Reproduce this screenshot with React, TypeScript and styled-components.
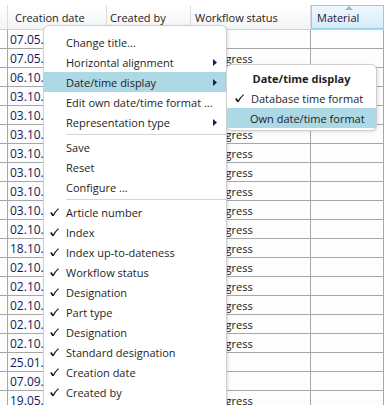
import React from "react";
import styled, { createGlobalStyle } from "styled-components";

const GlobalStyle = createGlobalStyle`
    body {
        margin: 0;
        background: #ffffff;
        font-family: "Open Sans", "Noto Sans", sans-serif;
        font-size: 11px;
    }
`;

const dates = [
    "07.05.", "07.05.", "06.10.", "03.10.", "03.10.", "03.10.", "03.10.",
    "03.10.", "03.10.", "03.10.", "02.10.", "18.10.", "02.10.", "02.10.",
    "02.10.", "02.10.", "02.10.", "25.01.", "07.09.", "19.05.",
];
const emptyStatus = [0, 17, 18];

const columns = "8px 99px 84px 120px 1fr";

const Screen = styled.div`
    position: relative;
    width: 384px;
    height: 405px;
    overflow: hidden;
    background: #fdfdfd;
`;

const TopStrip = styled.div`
    height: 5px;
    background: #ffffff;
`;

const HeaderRow = styled.div`
    display: grid;
    grid-template-columns: ${columns};
    height: 24px;
    background: linear-gradient(#ffffff, #f3f4f6);
    border-bottom: 1px solid #d0d0d0;
`;

const HeaderCell = styled.div<{ $active?: boolean; $pad?: number }>`
    position: relative;
    box-sizing: border-box;
    display: flex;
    align-items: center;
    padding-left: ${(p) => p.$pad ?? 4}px;
    color: ${(p) => (p.$active ? "#1e1436" : "#1b1b1b")};
    font-size: 11px;
    white-space: nowrap;
    overflow: hidden;
    border-right: 1px solid #dcdcdc;
    ${(p) =>
        p.$active &&
        `
        background: linear-gradient(#eef8fd, #d6edf9);
        border: 1px solid #90cdee;
        padding-left: 5px;
    `}
`;

const SortArrow = styled.svg`
    position: absolute;
    top: 0;
    left: 33px;
`;

const Row = styled.div`
    display: grid;
    grid-template-columns: ${columns};
    height: 19px;
    border-bottom: 1px solid #a7a7a7;
    box-sizing: border-box;
`;

const Cell = styled.div<{ $date?: boolean }>`
    box-sizing: border-box;
    display: flex;
    align-items: center;
    padding-left: ${(p) => (p.$date ? 2 : 4)}px;
    border-right: 1px solid #a7a7a7;
    color: ${(p) => (p.$date ? "#131a5e" : "#202020")};
    font-size: ${(p) => (p.$date ? 12 : 11)}px;
    white-space: nowrap;
    overflow: hidden;
`;

const Menu = styled.div`
    position: absolute;
    left: 43px;
    top: 25px;
    width: 184px;
    height: 400px;
    box-sizing: border-box;
    padding-top: 6px;
    background: #ffffff;
    border: 1px solid #cfcfcf;
    border-radius: 6px 6px 0 0;
    box-shadow: 1px 1px 3px rgba(0, 0, 0, 0.12);
`;

const Item = styled.div<{ $hot?: boolean; $indent?: number }>`
    position: relative;
    display: flex;
    align-items: center;
    height: 20px;
    padding-left: ${(p) => p.$indent ?? 22}px;
    background: ${(p) => (p.$hot ? "#add8e6" : "transparent")};
    color: #1e1e1e;
    font-size: 11px;
    white-space: nowrap;
`;

const Check = styled.svg<{ $left?: number }>`
    position: absolute;
    left: ${(p) => p.$left ?? 6}px;
    top: 6px;
`;

const Arrow = styled.svg`
    position: absolute;
    right: 9px;
    top: 7px;
`;

const Separator = styled.div`
    height: 1px;
    margin: 2px 0 2px 22px;
    background: #d4d4d4;
`;

const SubMenu = styled.div`
    position: absolute;
    left: 226px;
    top: 64px;
    width: 151px;
    height: 67px;
    box-sizing: border-box;
    padding-top: 3px;
    background: #ffffff;
    border: 1px solid #cfcfcf;
    border-radius: 6px;
    box-shadow: 1px 1px 3px rgba(0, 0, 0, 0.12);
    overflow: hidden;
`;

const SubTitle = styled.div`
    height: 20px;
    display: flex;
    align-items: center;
    justify-content: center;
    font-weight: 700;
    font-size: 11px;
    color: #1e1e1e;
`;

const checked = [
    "Article number",
    "Index",
    "Index up-to-dateness",
    "Workflow status",
    "Designation",
    "Part type",
    "Designation",
    "Standard designation",
    "Creation date",
    "Created by",
];

const SubArrow = () => (
    <Arrow width="4" height="7" viewBox="0 0 4 7">
        <path d="M0 0 L4 3.5 L0 7 Z" fill="#1c1f55" />
    </Arrow>
);

const Tick = ({ left }: { left?: number }) => (
    <Check $left={left} width="9" height="9" viewBox="0 0 9 9">
        <path d="M0.8 4.6 L3.2 7.8" stroke="#111" strokeWidth="1.7" fill="none" />
        <path d="M3.2 7.8 Q5 3.5 8.6 0.6" stroke="#111" strokeWidth="1.1" fill="none" />
    </Check>
);

export default function App() {
    return (
        <Screen>
            <GlobalStyle />
            <TopStrip />
            <HeaderRow>
                <HeaderCell />
                <HeaderCell $pad={7}>Creation date</HeaderCell>
                <HeaderCell $pad={3}>Created by</HeaderCell>
                <HeaderCell>Workflow status</HeaderCell>
                <HeaderCell $active>
                    <SortArrow width="8" height="4" viewBox="0 0 8 4">
                        <path d="M0 4 L4 0 L8 4 Z" fill="#a3b6c8" />
                    </SortArrow>
                    Material
                </HeaderCell>
            </HeaderRow>
            {dates.map((d, i) => (
                <Row key={i}>
                    <Cell />
                    <Cell $date>{d}</Cell>
                    <Cell />
                    <Cell>{emptyStatus.includes(i) ? "" : "In progress"}</Cell>
                    <Cell />
                </Row>
            ))}

            <Menu>
                <Item>Change title...</Item>
                <Item>
                    Horizontal alignment
                    <SubArrow />
                </Item>
                <Item $hot>
                    Date/time display
                    <SubArrow />
                </Item>
                <Item>Edit own date/time format ...</Item>
                <Item>
                    Representation type
                    <SubArrow />
                </Item>
                <Separator />
                <Item>Save</Item>
                <Item>Reset</Item>
                <Item>Configure ...</Item>
                <Separator />
                {checked.map((c, i) => (
                    <Item key={i}>
                        <Tick />
                        {c}
                    </Item>
                ))}
            </Menu>

            <SubMenu>
                <SubTitle>Date/time display</SubTitle>
                <Item $indent={24}>
                    <Tick left={8} />
                    Database time format
                </Item>
                <Item $hot $indent={23}>
                    Own date/time format
                </Item>
            </SubMenu>
        </Screen>
    );
}
